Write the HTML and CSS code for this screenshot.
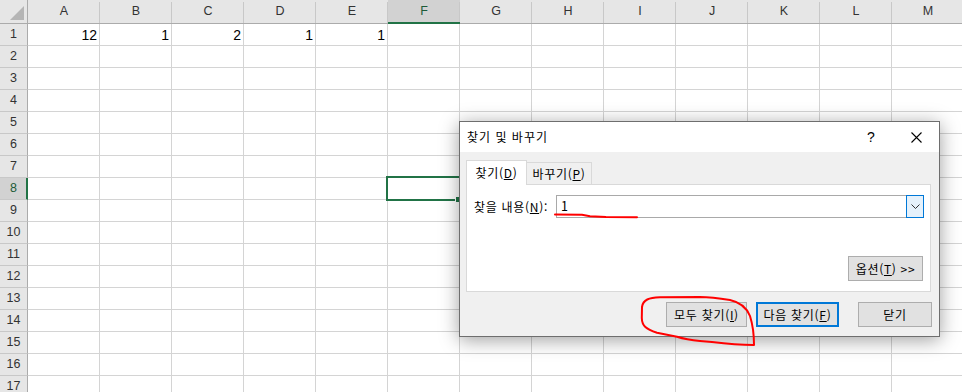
FILE: index.html
```html
<!DOCTYPE html>
<html lang="ko">
<head>
<meta charset="utf-8">
<title>찾기 및 바꾸기</title>
<link rel="stylesheet" href="styles.css">
</head>
<body>
<div class="sheet">
  <div class="corner"><span class="corner-tri"></span></div>
  <div class="colheads">
    <div class="ch">A</div><div class="ch">B</div><div class="ch">C</div><div class="ch">D</div><div class="ch">E</div><div class="ch sel">F</div><div class="ch">G</div><div class="ch">H</div><div class="ch">I</div><div class="ch">J</div><div class="ch">K</div><div class="ch">L</div><div class="ch">M</div>
  </div>
  <div class="rowheads">
    <div class="rh">1</div><div class="rh">2</div><div class="rh">3</div><div class="rh">4</div><div class="rh">5</div><div class="rh">6</div><div class="rh">7</div><div class="rh sel">8</div><div class="rh">9</div><div class="rh">10</div><div class="rh">11</div><div class="rh">12</div><div class="rh">13</div><div class="rh">14</div><div class="rh">15</div><div class="rh">16</div><div class="rh">17</div>
  </div>
  <div class="cells">
    <div class="cell">12</div>
    <div class="cell">1</div>
    <div class="cell">2</div>
    <div class="cell">1</div>
    <div class="cell">1</div>
    <div class="cell active"></div>
  </div>
</div>

<div class="dialog">
  <div class="titlebar">
    <span class="title">찾기 및 바꾸기</span>
    <span class="tb-btn help">?</span>
    <span class="tb-btn"><svg width="11" height="11" viewBox="0 0 11 11"><path d="M0.5 0.5 L10.5 10.5 M10.5 0.5 L0.5 10.5" stroke="#000" stroke-width="1.1" fill="none"/></svg></span>
  </div>
  <div class="dbody">
    <div class="tabs">
      <div class="tab active">찾기(<u>D</u>)</div>
      <div class="tab other">바꾸기(<u>P</u>)</div>
    </div>
    <div class="panel">
      <div class="findrow">
        <span class="flabel">찾을 내용(<u>N</u>):</span>
        <div class="combo">
          <span class="combo-val">1</span>
          <span class="combo-btn"><svg width="9" height="5" viewBox="0 0 9 5"><path d="M0.5 0.5 L4.5 4.5 L8.5 0.5" stroke="#333" stroke-width="1" fill="none"/></svg></span>
        </div>
      </div>
      <button class="btn opt">옵션(<u>T</u>) &gt;&gt;</button>
    </div>
    <div class="actions">
      <button class="btn all">모두 찾기(<u>I</u>)</button>
      <button class="btn next">다음 찾기(<u>F</u>)</button>
      <button class="btn close">닫기</button>
    </div>
  </div>
</div>

<svg class="ink" width="962" height="392" viewBox="0 0 962 392">
  <path d="M555 214.5 L582 214.8 L590 216.2 L606 217 L637 217.3" stroke="#ff0000" stroke-width="2" fill="none" stroke-linecap="round"/>
  <path d="M700 297 L660 297.3 C649 297.8 643 299.5 642 307 L641.8 318 C642 326 646 329 657 332.8 L677 336.8 C684 339 689 340 700 341 L712 342 C728 344 742 345 754 345 C754 336 752.5 324 750 316 C746 306 739 302 730 300 C720 298.5 710 297.2 700 297 Z" stroke="#ff0000" stroke-width="2" fill="none" stroke-linejoin="round"/>
</svg>
</body>
</html>
```

FILE: styles.css
```css
html, body {
  margin: 0;
  padding: 0;
}
body {
  width: 962px;
  height: 392px;
  overflow: hidden;
  position: relative;
  background: #fff;
  font-family: "Liberation Sans", Arial, sans-serif;
}

/* ---------- spreadsheet ---------- */
.sheet {
  display: grid;
  grid-template-columns: 28px 1fr;
  grid-template-rows: 24px 1fr;
  height: 392px;
}
.corner {
  box-sizing: border-box;
  background: #e6e6e6;
  border-right: 1px solid #ababab;
  border-bottom: 1px solid #ababab;
  display: flex;
  align-items: flex-end;
  justify-content: flex-end;
  padding: 0 3px 3px 0;
}
.corner-tri {
  width: 14px;
  height: 14px;
  background: #b5b5b5;
  clip-path: polygon(100% 0, 100% 100%, 0 100%);
}
.colheads {
  display: flex;
  background: #e6e6e6;
}
.ch {
  flex: 0 0 72px;
  box-sizing: border-box;
  height: 24px;
  border-bottom: 1px solid #ababab;
  position: relative;
  text-align: center;
  font-size: 12.5px;
  line-height: 23px;
  color: #333;
}
.ch::after {
  content: "";
  position: absolute;
  right: 0;
  top: 2px;
  bottom: 0;
  width: 1px;
  background: #c8c8c8;
}
.ch.sel {
  background: #d2d2d2;
  border-bottom: 2px solid #217346;
  line-height: 22px;
  color: #1d5b38;
}
.rowheads {
  display: flex;
  flex-direction: column;
  background: #e6e6e6;
}
.rh {
  flex: 0 0 22px;
  box-sizing: border-box;
  border-right: 1px solid #ababab;
  border-bottom: 1px solid #c8c8c8;
  text-align: center;
  font-size: 12.5px;
  line-height: 21px;
  color: #333;
}
.rh.sel {
  background: #d2d2d2;
  border-right: 2px solid #217346;
  padding-left: 1px;
  color: #1d5b38;
}
.cells {
  display: grid;
  grid-template-columns: repeat(13, 72px);
  grid-auto-rows: 22px;
  align-content: start;
  background-image:
    linear-gradient(to right, transparent 71px, #d4d4d4 71px),
    linear-gradient(to bottom, transparent 21px, #d4d4d4 21px);
  background-size: 72px 100%, 100% 22px;
}
.cell {
  text-align: right;
  padding-right: 3px;
  font-size: 14px;
  line-height: 22px;
  color: #000;
}
.cell.active {
  grid-column: 6;
  grid-row: 8;
  position: relative;
}
.cell.active::before {
  content: "";
  position: absolute;
  left: -2px;
  top: -2px;
  right: -1px;
  bottom: -1px;
  border: 2px solid #217346;
}
.cell.active::after {
  content: "";
  position: absolute;
  right: -2px;
  bottom: -3px;
  width: 5px;
  height: 5px;
  background: #217346;
  border: 1px solid #fff;
}

/* ---------- dialog ---------- */
.dialog {
  position: absolute;
  left: 459px;
  top: 121px;
  width: 481px;
  height: 216px;
  box-sizing: border-box;
  border: 1px solid #6e6e6e;
  background: #f0f0f0;
  box-shadow: 0 3px 18px rgba(0, 0, 0, 0.38);
  display: flex;
  flex-direction: column;
  font-family: "Noto Sans CJK KR", "Noto Sans", sans-serif;
  font-size: 12px;
  letter-spacing: 0.7px;
  color: #000;
}
.titlebar {
  height: 30px;
  flex: 0 0 30px;
  background: #fff;
  display: flex;
  align-items: center;
  padding-left: 7px;
}
.title {
  flex: 1;
  line-height: 30px;
  letter-spacing: 1px;
}
.tb-btn {
  width: 46px;
  height: 30px;
  display: flex;
  align-items: center;
  justify-content: center;
  letter-spacing: 0;
}
.tb-btn.help {
  font-family: "Liberation Sans", sans-serif;
  font-size: 14px;
  padding-left: 2px;
  box-sizing: border-box;
}
.dbody {
  flex: 1;
  display: flex;
  flex-direction: column;
  padding: 8px 7px 9px 6px;
}
.tabs {
  display: flex;
  align-items: flex-end;
  height: 24px;
}
.tab {
  box-sizing: border-box;
  border: 1px solid #d9d9d9;
  border-bottom: none;
  text-align: center;
}
.tab.active {
  width: 61px;
  height: 25px;
  margin-bottom: -1px;
  background: #fff;
  position: relative;
  z-index: 1;
  line-height: 24px;
}
.tab.other {
  width: 66px;
  height: 22px;
  margin-left: -1px;
  background: #f0f0f0;
  line-height: 22px;
}
.panel {
  width: 465px;
  height: 108px;
  box-sizing: border-box;
  border: 1px solid #d9d9d9;
  background: #fff;
  padding: 10px 6px 10px 7px;
  display: flex;
  flex-direction: column;
  justify-content: space-between;
}
.findrow {
  display: flex;
  align-items: center;
  justify-content: space-between;
}
.flabel {
  line-height: 23px;
}
.combo {
  width: 368px;
  height: 23px;
  box-sizing: border-box;
  border: 1px solid #a9a9a9;
  display: flex;
  align-items: stretch;
}
.combo-val {
  flex: 1;
  padding-left: 4px;
  line-height: 20px;
  font-size: 12.5px;
}
.combo-btn {
  width: 18px;
  margin: -1px -1px -1px 0;
  box-sizing: border-box;
  border: 1px solid #0078d7;
  background: #e5f1fb;
  display: flex;
  align-items: center;
  justify-content: center;
}
.btn {
  font: inherit;
  letter-spacing: inherit;
  color: #000;
  box-sizing: border-box;
  height: 25px;
  padding: 0;
  background: #e1e1e1;
  border: 1px solid #adadad;
  border-radius: 0;
}
.btn.opt {
  width: 75px;
  align-self: flex-end;
  margin-right: 1px;
}
.actions {
  display: flex;
  justify-content: flex-end;
  margin-top: 10px;
}
.btn.all {
  width: 81px;
}
.btn.next {
  width: 83px;
  margin-left: 9px;
  border: 2px solid #0078d7;
}
.btn.close {
  width: 74px;
  margin-left: 19px;
}

/* ---------- hand-drawn annotations ---------- */
.ink {
  position: absolute;
  left: 0;
  top: 0;
  pointer-events: none;
}
```
